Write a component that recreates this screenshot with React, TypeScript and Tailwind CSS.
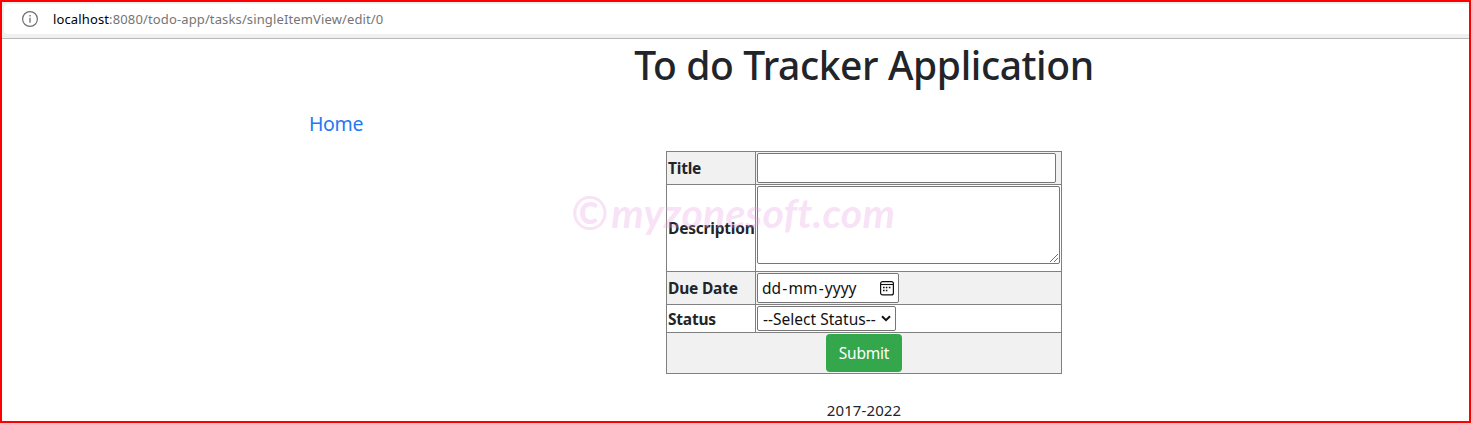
import type { ReactNode } from "react";

function InfoIcon() {
  return (
    <svg className="size-4" viewBox="0 0 16 16" fill="none" stroke="#6f6f6f">
      <circle cx="8" cy="8" r="7.4" strokeWidth="1.2" />
      <path d="M8 6.8v5" strokeWidth="1.3" />
      <path d="M8 4v1.5" strokeWidth="1.4" />
    </svg>
  );
}

function CalendarIcon() {
  return (
    <svg className="h-[15px] w-[14px]" viewBox="0 0 14 15" fill="none" stroke="#111">
      <rect x="0.6" y="0.6" width="12.8" height="13.3" rx="2" strokeWidth="1.2" />
      <path d="M1 3.5h12" strokeWidth="1.1" />
      <path d="M5.8 6.5h1.6M8.8 6.5h1.6M3 6.5h1.6M3 9.5h1.6M5.8 9.5h1.6" strokeWidth="1.5" />
    </svg>
  );
}

function Label({ shaded, children }: { shaded?: boolean; children: ReactNode }) {
  return (
    <div className={`flex items-center pl-px text-[15.5px] font-bold tracking-[-0.2px] whitespace-nowrap ${shaded ? "bg-[#f1f1f1]" : "bg-white"}`}>
      {children}
    </div>
  );
}

export default function App() {
  return (
    <div className="relative flex h-[423px] w-[1471px] flex-col overflow-hidden border-2 border-[#ff0000] bg-white font-['Noto_Sans',sans-serif] text-base leading-6 text-[#212529]">
      <header className="h-[37px] shrink-0 border-b border-[#b9b9b9] bg-[#f0f0f0] pt-0.5 pl-0.5">
        <div className="flex h-[30px] items-center gap-[15px] rounded-l bg-white pl-[18px]">
          <InfoIcon />
          <span className="text-[13px] tracking-[0.13px] text-[#757575]">
            <span className="text-black">localhost</span>:8080/todo-app/tasks/singleItemView/edit/0
          </span>
        </div>
      </header>
      <main className="ml-[292px] flex w-[1140px] flex-col px-[15px]">
        <h1 className="mt-0.5 text-center text-[39px] leading-[48px] font-medium tracking-[-0.4px]">
          <span>To do Tracker Application</span>
        </h1>
        <nav className="mt-[20px] flex h-[30px] items-center text-[19.5px] tracking-[-0.35px] text-[#2578f5]">
          <a href="#">Home</a>
        </nav>
        <form className="mt-[12px] grid w-[396px] grid-cols-[88px_305px] grid-rows-[32px_86px_32px_27px_40px] gap-px self-center bg-[#808080] p-px">
          <Label shaded><span>Title</span></Label>
          <div className="bg-[#f1f1f1] p-px">
            <input aria-label="Title" className="block h-[30px] w-[299px] rounded-xs border border-[#767676] bg-white" />
          </div>
          <Label><span>Description</span></Label>
          <div className="bg-white p-px">
            <div className="flex h-[78px] w-[303px] items-end justify-end rounded-xs border border-[#767676]">
              <svg className="mr-px mb-px size-2" viewBox="0 0 8 8" stroke="#606060" strokeWidth="0.9">
                <path d="M0 8L8 0M4 8L8 4" />
              </svg>
            </div>
          </div>
          <Label shaded><span>Due Date</span></Label>
          <div className="bg-[#f1f1f1] p-px">
            <div className="flex h-[30px] w-[142px] items-center justify-between rounded-xs border border-[#767676] bg-white pr-[4px] pl-[4px] text-[#111]">
              <span className="flex text-[15.5px]">
                <span>dd</span>
                <span className="px-[1.2px]">-</span>
                <span>mm</span>
                <span className="px-[1.2px]">-</span>
                <span>yyyy</span>
              </span>
              <CalendarIcon />
            </div>
          </div>
          <Label><span>Status</span></Label>
          <div className="bg-white p-px">
            <div className="flex h-[25px] w-[139px] items-center justify-between rounded-xs border border-[#767676] bg-white pr-[4px] pl-[5px] whitespace-nowrap text-[#111]">
              <span className="text-[15.5px] tracking-[0.02px]">--Select Status--</span>
              <svg className="h-[7px] w-[10px]" viewBox="0 0 10 7" fill="none" stroke="#111" strokeWidth="2">
                <path d="M1 1.2L5 5.2L9 1.2" />
              </svg>
            </div>
          </div>
          <div className="col-span-2 flex items-center justify-center bg-[#f1f1f1]">
            <button type="button" className="h-[38px] w-[76px] rounded bg-[#34a64c] text-[15.5px] tracking-[-0.2px] text-white">Submit</button>
          </div>
        </form>
        <footer className="mt-6 text-center text-[15px] tracking-[0.1px]"><span>2017-2022</span></footer>
      </main>
      <div className="pointer-events-none absolute top-[179px] left-[569px] flex items-center gap-[3px] font-['Lato',cursive] text-[41px] leading-[64px] font-bold tracking-[0.2px] whitespace-nowrap text-[#e89be0]/30 italic">
        <span className="text-[45px]">©</span>
        <span>myzonesoft.com</span>
      </div>
    </div>
  );
}
